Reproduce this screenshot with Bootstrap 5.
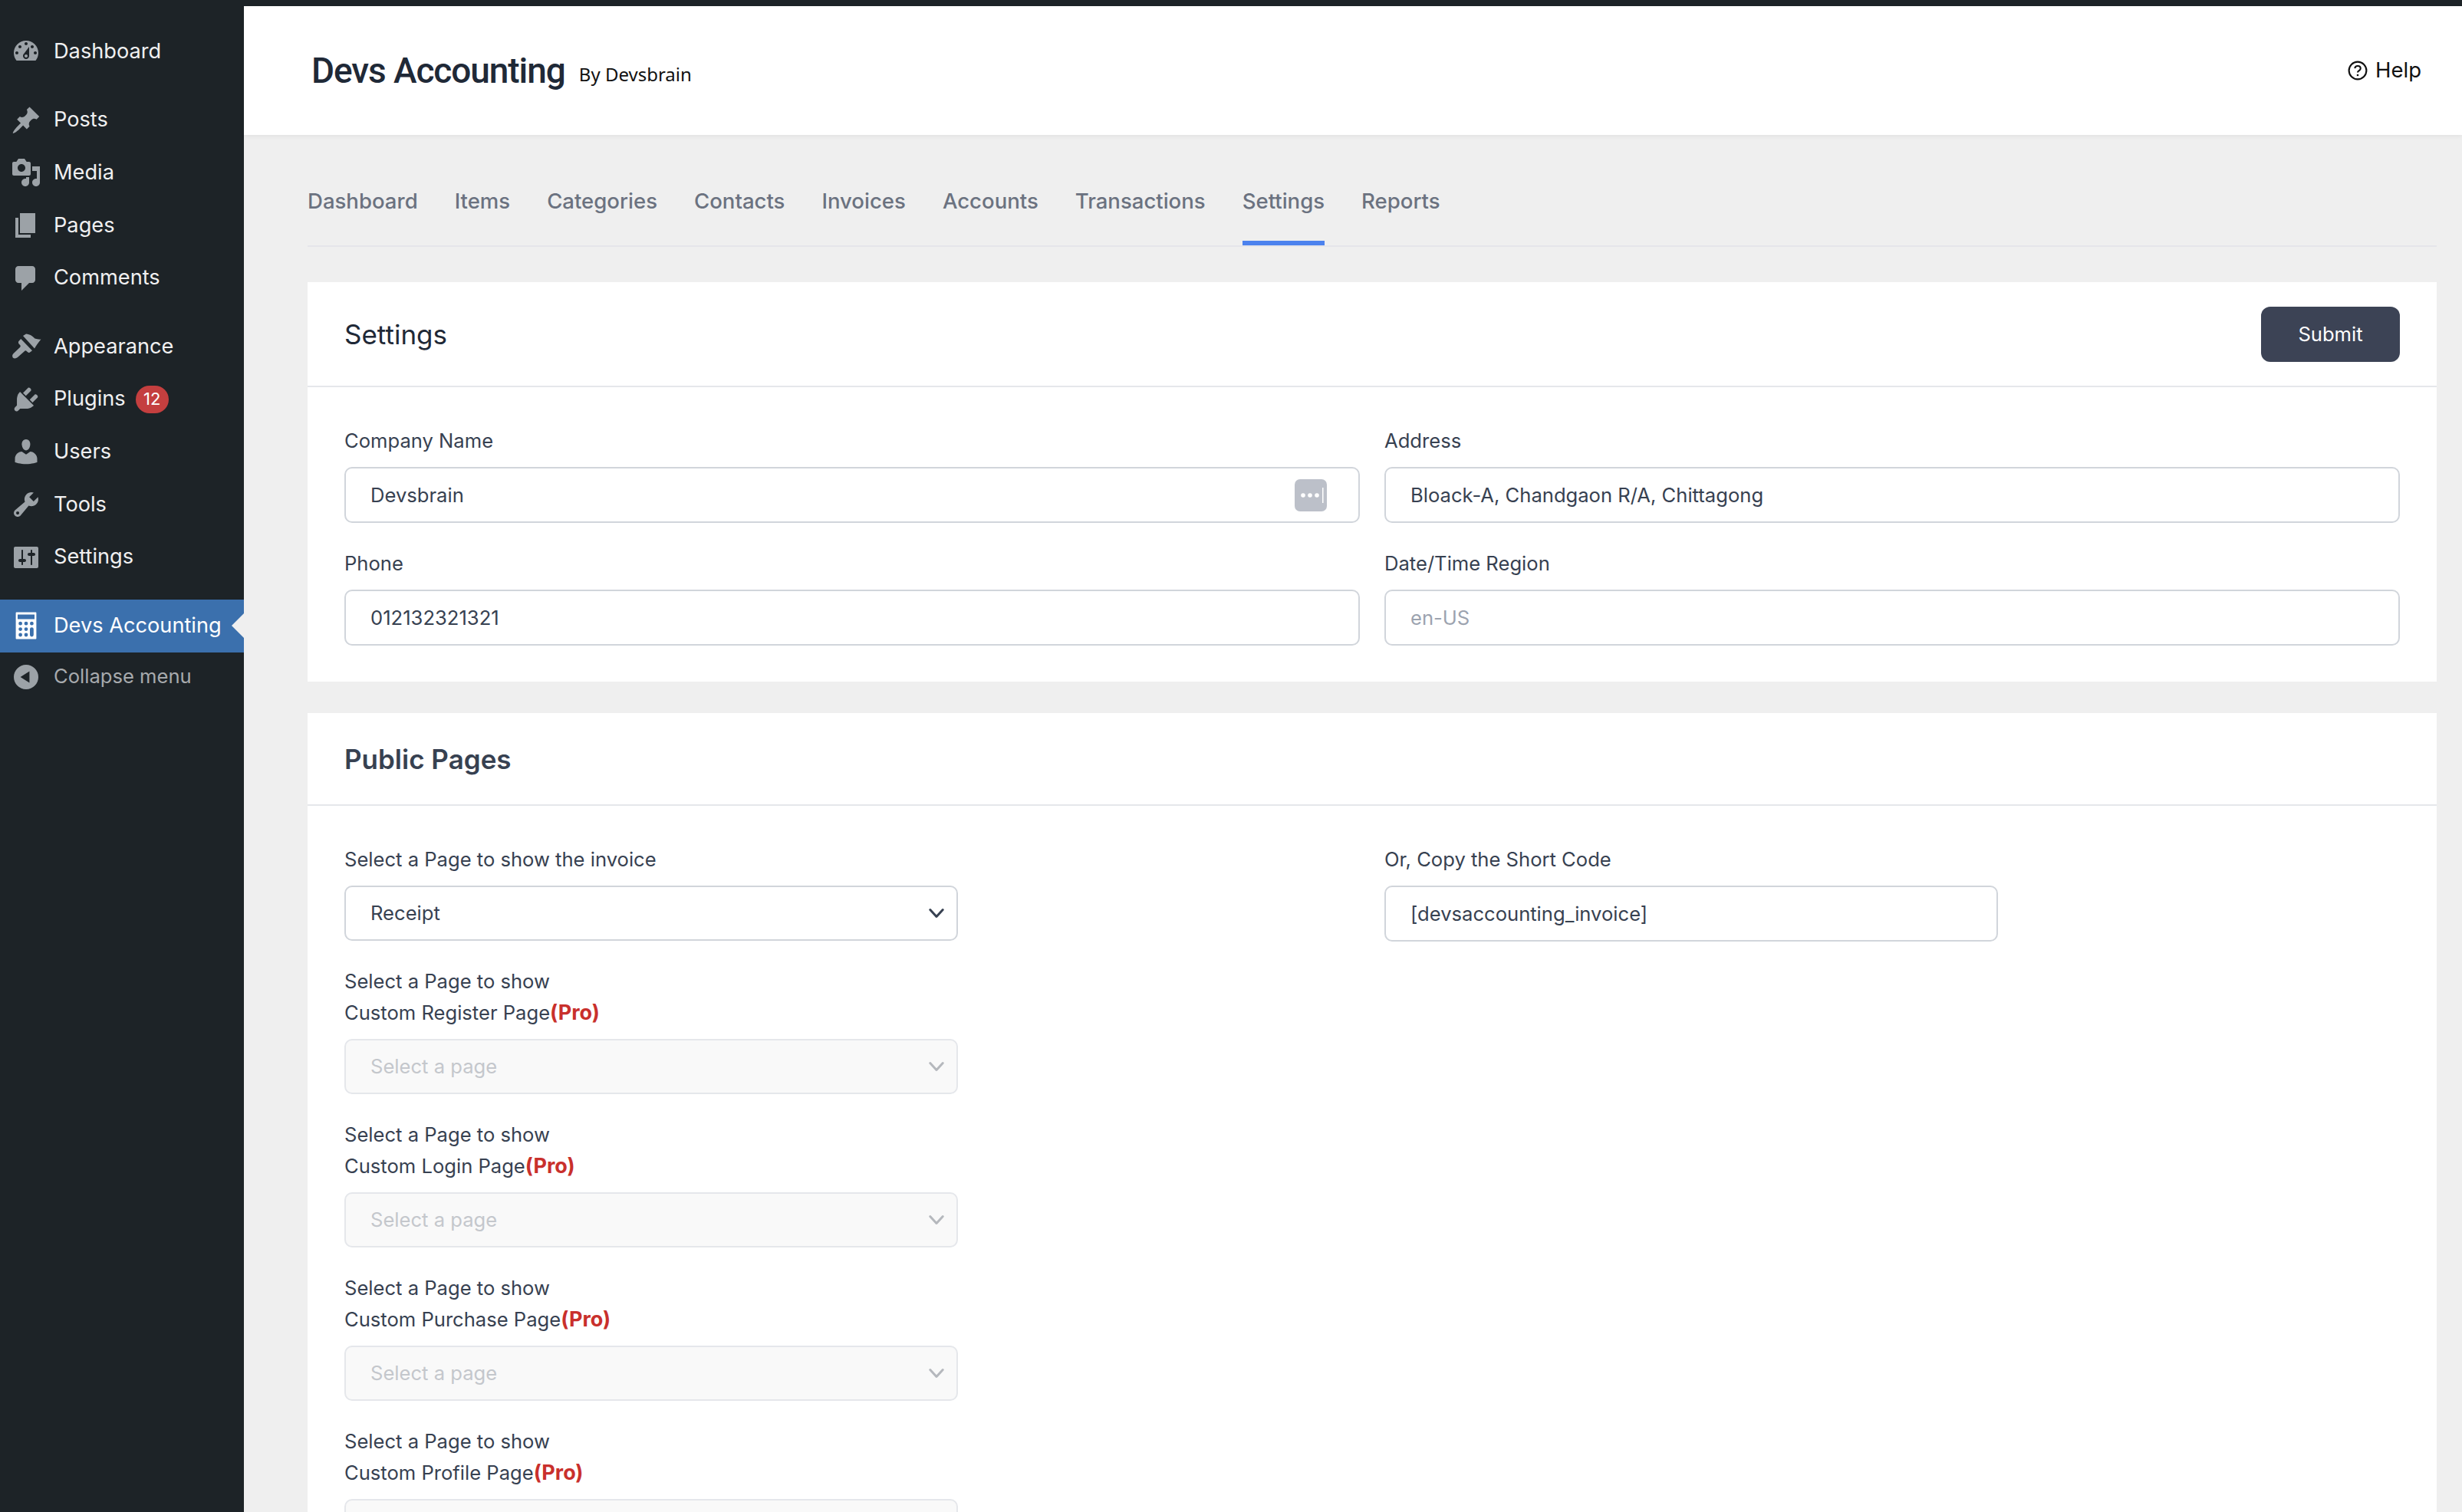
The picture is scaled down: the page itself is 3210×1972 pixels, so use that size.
<!doctype html>
<html lang="en"><head><meta charset="utf-8"><title>Devs Accounting</title>
<link rel="stylesheet" href="https://cdn.jsdelivr.net/npm/bootstrap@5.3.0/dist/css/bootstrap.min.css">
<style>
html,body{height:1972px;overflow:hidden;}
body{font-family:Inter,"Noto Sans",sans-serif;background:#efefef;color:#374151;font-size:25.6px;}
.wp-shell{height:1972px;}
.wp-side{width:318px;background:#1d2327;padding-top:33px;flex:none;color:#f0f0f1;font-size:27.2px;}
.wp-item{height:68.6px;display:flex;align-items:center;white-space:nowrap;}
.wp-ic{width:40px;height:40px;margin-left:14px;margin-right:16px;flex:none;fill:#9ca2a7;}
.wp-gap{height:21px;}
.wp-badge{background:#c43f3f;color:#fff;border-radius:18px;height:36px;width:43px;font-size:22px;margin-left:13px;}
.wp-active{background:#3b70ad;color:#fff;position:relative;}
.wp-active .wp-ic{fill:#fff;}
.wp-active::after{content:"";position:absolute;right:0;top:50%;margin-top:-16px;border:16px solid transparent;border-right-color:#efefef;border-left-width:0;}
.wp-collapse{color:#a7aaad;font-size:25.6px;height:64px;}
.wp-main{flex:1;min-width:0;border-top:8px solid #1d2327;}
.da-head{height:168px;background:#fff;padding:0 53px 0 88px;box-shadow:0 2px 6px rgba(0,0,0,.06);}
.da-logo{font-family:Roboto,sans-serif;font-weight:500;font-size:46px;letter-spacing:-1.07px;color:#1f2937;line-height:1;}
.da-by{font-family:"Noto Sans",sans-serif;font-size:24px;color:#111;margin-left:18px;position:relative;top:5px;}
.da-help{color:#111;font-size:27.5px;gap:10px;}
.da-body{padding:0 33px 0 83px;}
.da-tabs{height:146px;border-bottom:2px solid #e5e5ea;gap:48px;}
.da-tab{height:144px;line-height:172px;color:#6b7280;font-weight:500;font-size:27.55px;text-decoration:none;}
.da-tab-on{border-bottom:6px solid #4c82ee;}
.da-card{background:#fff;margin-top:46px;}
.da-card + .da-card{margin-top:41px;}
.da-card-head{height:137px;padding:0 48px;border-bottom:2px solid #e5e7eb;}
.da-card-head-sm{height:121px;}
.da-title{font-size:35px;font-weight:400;color:#1f2937;margin:0;}
.da-title-b{font-weight:600;color:#374151;}
.da-submit{background:#3c4355;color:#fff;font-size:25.6px;width:181px;height:72px;border-radius:12px;border:0;padding:2px 0 0;}
.da-form{padding:49px 48px 47px;}
.da-row{--bs-gutter-x:32px;}
.da-label{display:block;line-height:41px;margin:0 0 14px;font-size:25.6px;color:#374151;}
.da-control,.da-select{height:73px;border:2px solid #d1d5db;border-radius:10px;font-size:25.6px;color:#374151;padding:0 32px;box-shadow:none;}
.da-select{height:72px;--bs-form-select-bg-img:none;background-image:url("data:image/svg+xml,%3Csvg xmlns='http://www.w3.org/2000/svg' viewBox='0 0 16 16'%3E%3Cpath fill='none' stroke='%23374151' stroke-width='2' stroke-linecap='round' stroke-linejoin='round' d='M2.5 5l5.5 6 5.5-6'/%3E%3C/svg%3E");background-repeat:no-repeat;background-position:right 14px center;background-size:24px 24px;}
.da-select:disabled{background-color:#f9f9f9;border-color:#e5e7eb;color:#c4c7cc;opacity:1;background-image:url("data:image/svg+xml,%3Csvg xmlns='http://www.w3.org/2000/svg' viewBox='0 0 16 16'%3E%3Cpath fill='none' stroke='%23b5b8bd' stroke-width='2' stroke-linecap='round' stroke-linejoin='round' d='M2.5 5l5.5 6 5.5-6'/%3E%3C/svg%3E");}
.da-control::placeholder{color:#9ca3af;}
.da-field{margin-bottom:32px;}
.da-half{width:800px;}
.da-pro{color:#c9302c;font-weight:700;font-size:27px;}
.da-key{right:43px;top:50%;margin-top:-21px;width:42px;height:42px;}
</style></head><body>
<div class="wp-shell d-flex">
<nav class="wp-side">
<div class="wp-item"><svg class="wp-ic" viewBox="0 0 20 20"><path fill-rule="evenodd" d="M3.760 16h12.480c1.100-1.370 1.760-3.110 1.760-5 0-4.420-3.580-8-8-8s-8 3.580-8 8c0 1.890.66 3.630 1.760 5zM10 4c.55 0 1 .45 1 1s-.45 1-1 1-1-.45-1-1 .45-1 1-1zM6 6c.55 0 1 .45 1 1s-.45 1-1 1-1-.45-1-1 .45-1 1-1zm8 0c.55 0 1 .45 1 1s-.45 1-1 1-1-.45-1-1 .45-1 1-1zm-5.370 5.550L12 7v6c0 1.100-.9 2-2 2s-2-.9-2-2c0-.57.24-1.080.63-1.450zM4 10c.55 0 1 .45 1 1s-.45 1-1 1-1-.45-1-1 .45-1 1-1zm12 0c.55 0 1 .45 1 1s-.45 1-1 1-1-.45-1-1 .45-1 1-1zm-5 3c0-.55-.45-1-1-1s-1 .45-1 1 .45 1 1 1 1-.45 1-1z"/></svg>Dashboard</div>
<div class="wp-gap"></div>
<div class="wp-item"><svg class="wp-ic" viewBox="0 0 20 20"><path d="M10.440 3.020l1.820-1.820 6.360 6.350-1.830 1.820c-1.050-.68-2.480-.57-3.410.36l-.75.75c-.92.93-1.040 2.350-.35 3.410l-1.830 1.820-2.410-2.410-2.800 2.790c-.42.42-3.380 2.710-3.800 2.290s1.860-3.390 2.280-3.810l2.790-2.790L4.100 9.360l1.830-1.820c1.050.69 2.480.57 3.400-.36l.75-.75c.93-.92 1.050-2.350.36-3.410z"/></svg>Posts</div>
<div class="wp-item"><svg class="wp-ic" viewBox="0 0 20 20"><path fill-rule="evenodd" d="M13 11V4c0-.55-.45-1-1-1h-1.670L9 1H5L3.670 3H2c-.55 0-1 .45-1 1v7c0 .55.45 1 1 1h10c.55 0 1-.45 1-1zM7 4.500c1.380 0 2.500 1.120 2.500 2.500S8.380 9.500 7 9.500 4.500 8.380 4.500 7 5.620 4.500 7 4.500z"/><path d="M14 6h5v10.500c0 1.380-1.120 2.500-2.500 2.500S14 17.880 14 16.500s1.120-2.500 2.500-2.500c.17 0 .34.020.5.050V9h-3V6zm-4 8.050V13h2v3.500c0 1.380-1.120 2.500-2.500 2.500S7 17.880 7 16.500 8.120 14 9.500 14c.17 0 .34.020.5.050z"/></svg>Media</div>
<div class="wp-item"><svg class="wp-ic" viewBox="0 0 20 20"><path d="M6 15V2h10v13H6zm-1 1h8v2H3V5h2v11z"/></svg>Pages</div>
<div class="wp-item"><svg class="wp-ic" viewBox="0 0 20 20"><path d="M5 2h9c1.100 0 2 .9 2 2v7c0 1.100-.9 2-2 2h-2l-5 5v-5H5c-1.100 0-2-.9-2-2V4c0-1.100.9-2 2-2z"/></svg>Comments</div>
<div class="wp-gap"></div>
<div class="wp-item"><svg class="wp-ic" viewBox="0 0 20 20"><path d="M8 3L10 1.800C12.500 2 14.500 3.400 15.700 4.800 17 5.200 18.400 5.400 19.700 5.300 18 7.500 16.500 9.500 15.500 11.200Z"/><path d="M6.600 5L14 12.600 12.500 13.800C12 14.200 11.200 13.800 10.600 13.200 10 12.600 9.400 12.400 9 13L4.500 17C3.500 17.800 2.200 18 1.400 17.200 .8 16.400 1 15.200 1.800 14.500L6 10.500C6.600 10 6.400 9.300 5.800 8.800 5 8 4.700 7.200 5.200 6.500Z"/></svg>Appearance</div>
<div class="wp-item"><svg class="wp-ic" viewBox="0 0 20 20"><path d="M13.110 4.360L9.870 7.600 8 5.730l3.240-3.240c.35-.34 1.050-.2 1.560.32.52.51.66 1.210.31 1.550zm-8 1.770l.91-1.120 9.010 9.010-1.190.84c-.71.71-2.630 1.160-3.820 1.160H6.140L4.900 17.260c-.59.59-1.540.59-2.120 0-.59-.58-.59-1.530 0-2.120l1.240-1.240v-3.880c0-1.130.4-3.040 1.090-3.890zm7.260 3.970l3.240-3.240c.34-.35 1.040-.21 1.550.31.52.51.66 1.210.31 1.550l-3.240 3.250z"/></svg>Plugins<span class="wp-badge d-inline-flex align-items-center justify-content-center">12</span></div>
<div class="wp-item"><svg class="wp-ic" viewBox="0 0 20 20"><path d="M10 9.250c-2.270 0-2.730-3.440-2.730-3.440C7 4.020 7.820 2 9.970 2c2.160 0 2.980 2.020 2.710 3.810 0 0-.41 3.440-2.680 3.440zm0 2.570L12.720 10c2.390 0 4.520 2.330 4.520 4.530v2.490s-3.650 1.130-7.240 1.130c-3.650 0-7.240-1.130-7.240-1.130v-2.490c0-2.250 1.940-4.480 4.470-4.480z"/></svg>Users</div>
<div class="wp-item"><svg class="wp-ic" viewBox="0 0 20 20"><path fill-rule="evenodd" d="M16.680 9.770c-1.340 1.340-3.300 1.670-4.950.99l-5.410 6.520c-.99.99-2.590.99-3.580 0s-.99-2.590 0-3.570l6.520-5.420c-.68-1.650-.35-3.610.99-4.950 1.280-1.280 3.120-1.620 4.720-1.060l-2.890 2.890 2.820 2.820 2.860-2.870c.53 1.580.18 3.390-1.080 4.650zM3.810 16.210c.4.39 1.040.39 1.430 0 .4-.4.4-1.040 0-1.430-.39-.4-1.030-.4-1.430 0-.39.39-.39 1.030 0 1.430z"/></svg>Tools</div>
<div class="wp-item"><svg class="wp-ic" viewBox="0 0 20 20"><path fill-rule="evenodd" d="M18 16V4c0-.55-.45-1-1-1H3c-.55 0-1 .45-1 1v12c0 .55.45 1 1 1h14c.55 0 1-.45 1-1zM8 11h1c.55 0 1 .45 1 1s-.45 1-1 1H8v1.500c0 .28-.22.5-.5.5s-.5-.22-.5-.5V13H6c-.55 0-1-.45-1-1s.45-1 1-1h1V5.500c0-.28.22-.5.5-.5s.5.22.5.5V11zm5-2h-1c-.55 0-1-.45-1-1s.45-1 1-1h1V5.500c0-.28.22-.5.5-.5s.5.22.5.5V7h1c.55 0 1 .45 1 1s-.45 1-1 1h-1v5.500c0 .28-.22.5-.5.5s-.5-.22-.5-.5V9z"/></svg>Settings</div>
<div class="wp-gap"></div>
<div class="wp-item wp-active"><svg class="wp-ic" viewBox="0 0 20 20"><path fill-rule="evenodd" d="M3.800 1.200h12.400c.3 0 .5.200.5.500v16.600c0 .3-.2.500-.5.500H3.800c-.3 0-.5-.2-.5-.5V1.700c0-.3.2-.5.5-.5zM4.500 2.700v3h11v-3zM6.300 7.400a1.200 1.200 0 1 0 0 2.400 1.200 1.200 0 0 0 0-2.400zm3.700 0a1.200 1.200 0 1 0 0 2.400 1.200 1.200 0 0 0 0-2.400zm3.700 0a1.200 1.200 0 1 0 0 2.400 1.200 1.200 0 0 0 0-2.400zM6.300 11.100a1.200 1.200 0 1 0 0 2.400 1.200 1.200 0 0 0 0-2.400zm3.700 0a1.200 1.200 0 1 0 0 2.400 1.200 1.200 0 0 0 0-2.400zM6.300 14.800a1.200 1.200 0 1 0 0 2.400 1.200 1.200 0 0 0 0-2.400zm3.700 0a1.200 1.200 0 1 0 0 2.400 1.200 1.200 0 0 0 0-2.400zM12.500 12.300a1.200 1.200 0 0 1 2.400 0V16a1.200 1.200 0 0 1-2.400 0z"/></svg>Devs Accounting</div>
<div class="wp-item wp-collapse"><svg class="wp-ic" viewBox="0 0 20 20"><path fill-rule="evenodd" d="M10 2a8 8 0 1 1 0 16 8 8 0 0 1 0-16zM12.200 6.300L6.300 10l5.900 3.700z"/></svg>Collapse menu</div>
</nav>
<main class="wp-main">
<header class="da-head d-flex align-items-center justify-content-between">
<div class="d-flex align-items-center"><span class="da-logo">Devs Accounting</span><span class="da-by">By Devsbrain</span></div>
<div class="da-help d-flex align-items-center"><svg width="26" height="26" viewBox="0 0 16 16"><circle cx="8" cy="8" r="7" fill="none" stroke="#111" stroke-width="1.300"/><path d="M5.700 6.200A2.300 2.300 0 0 1 8 4.300c1.300 0 2.300.8 2.300 2 0 1.700-2.300 1.700-2.300 3.200" fill="none" stroke="#111" stroke-width="1.300"/><circle cx="8" cy="11.700" r=".8" fill="#111"/></svg>Help</div>
</header>
<div class="da-body">
<nav class="da-tabs d-flex">
<a class="da-tab" href="#">Dashboard</a><a class="da-tab" href="#">Items</a><a class="da-tab" href="#">Categories</a><a class="da-tab" href="#">Contacts</a><a class="da-tab" href="#">Invoices</a><a class="da-tab" href="#">Accounts</a><a class="da-tab" href="#">Transactions</a><a class="da-tab da-tab-on" href="#">Settings</a><a class="da-tab" href="#">Reports</a>
</nav>
<section class="da-card">
<div class="da-card-head d-flex align-items-center justify-content-between"><h2 class="da-title">Settings</h2><button class="btn da-submit" type="button">Submit</button></div>
<div class="da-form">
<div class="row da-row">
<div class="col-6 da-field"><label class="da-label">Company Name</label><div class="position-relative"><input class="form-control da-control" value="Devsbrain"><svg class="da-key position-absolute" viewBox="0 0 42 42"><rect width="42" height="42" rx="7" fill="#bcc0c9"/><circle cx="11" cy="21" r="2.800" fill="#fff"/><circle cx="20" cy="21" r="2.800" fill="#fff"/><circle cx="29" cy="21" r="2.800" fill="#fff"/><rect x="36" y="11" width="1.500" height="20" fill="#fff"/></svg></div></div>
<div class="col-6 da-field"><label class="da-label">Address</label><input class="form-control da-control" value="Bloack-A, Chandgaon R/A, Chittagong"></div>
<div class="col-6"><label class="da-label">Phone</label><input class="form-control da-control" value="012132321321"></div>
<div class="col-6"><label class="da-label">Date/Time Region</label><input class="form-control da-control" placeholder="en-US"></div>
</div></div>
</section>
<section class="da-card">
<div class="da-card-head da-card-head-sm d-flex align-items-center"><h2 class="da-title da-title-b">Public Pages</h2></div>
<div class="da-form">
<div class="row da-row">
<div class="col-6">
<div class="da-half da-field"><label class="da-label">Select a Page to show the invoice</label><select class="form-select da-select"><option>Receipt</option></select></div>
<div class="da-half da-field"><label class="da-label">Select a Page to show<br>Custom Register Page<span class="da-pro">(Pro)</span></label><select class="form-select da-select" disabled><option>Select a page</option></select></div>
<div class="da-half da-field"><label class="da-label">Select a Page to show<br>Custom Login Page<span class="da-pro">(Pro)</span></label><select class="form-select da-select" disabled><option>Select a page</option></select></div>
<div class="da-half da-field"><label class="da-label">Select a Page to show<br>Custom Purchase Page<span class="da-pro">(Pro)</span></label><select class="form-select da-select" disabled><option>Select a page</option></select></div>
<div class="da-half da-field"><label class="da-label">Select a Page to show<br>Custom Profile Page<span class="da-pro">(Pro)</span></label><select class="form-select da-select" disabled><option>Select a page</option></select></div>
</div>
<div class="col-6"><div class="da-half"><label class="da-label">Or, Copy the Short Code</label><input class="form-control da-control" value="[devsaccounting_invoice]"></div></div>
</div></div>
</section>
</div>
</main>
</div>
<script src="https://cdn.jsdelivr.net/npm/bootstrap@5.3.0/dist/js/bootstrap.bundle.min.js"></script>
</body></html>
